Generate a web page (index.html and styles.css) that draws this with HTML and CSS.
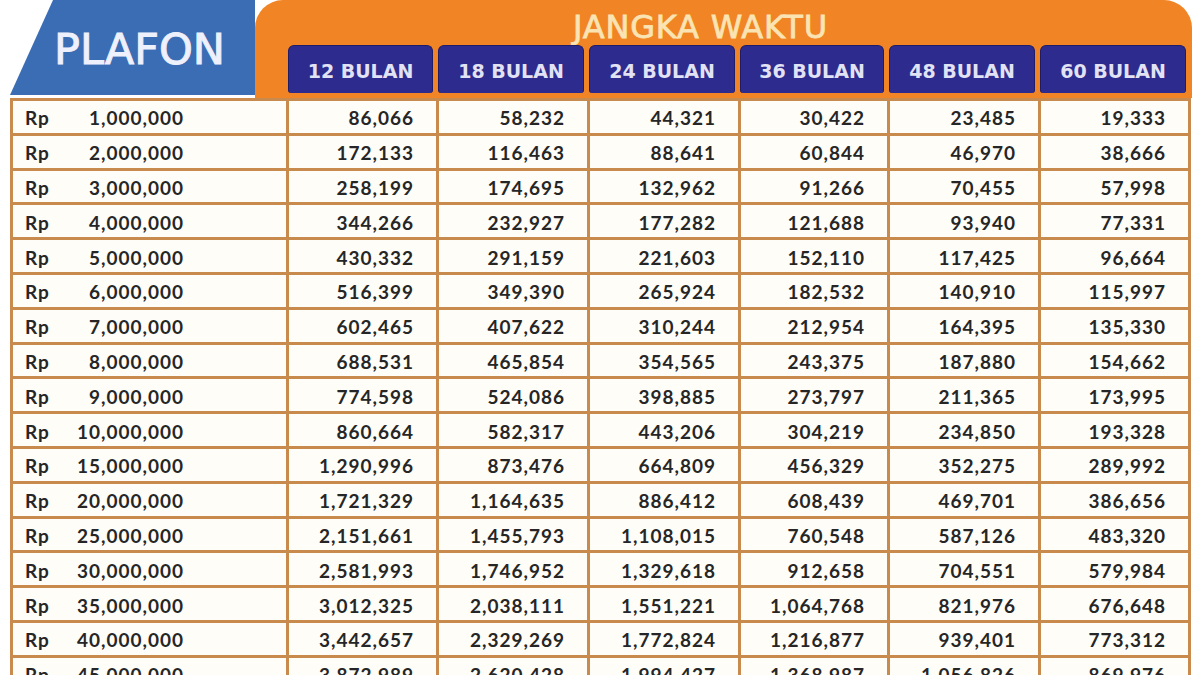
FILE: index.html
```html
<!DOCTYPE html>
<html>
<head>
<meta charset="utf-8">
<link rel="stylesheet" href="styles.css">
</head>
<body>
<div class="page">
  <div class="header">
    <div class="plafon"><span>PLAFON</span></div>
    <div class="jangka">
      <div class="jangka-title">JANGKA WAKTU</div>
      <div class="tabs">
        <div class="tab">12 BULAN</div>
        <div class="tab">18 BULAN</div>
        <div class="tab">24 BULAN</div>
        <div class="tab">36 BULAN</div>
        <div class="tab">48 BULAN</div>
        <div class="tab">60 BULAN</div>
      </div>
    </div>
  </div>
  <div class="grid">
    <div class="c0"><span>Rp</span><span>1,000,000</span></div><div class="n">86,066</div><div class="n">58,232</div><div class="n">44,321</div><div class="n">30,422</div><div class="n">23,485</div><div class="n">19,333</div>
    <div class="c0"><span>Rp</span><span>2,000,000</span></div><div class="n">172,133</div><div class="n">116,463</div><div class="n">88,641</div><div class="n">60,844</div><div class="n">46,970</div><div class="n">38,666</div>
    <div class="c0"><span>Rp</span><span>3,000,000</span></div><div class="n">258,199</div><div class="n">174,695</div><div class="n">132,962</div><div class="n">91,266</div><div class="n">70,455</div><div class="n">57,998</div>
    <div class="c0"><span>Rp</span><span>4,000,000</span></div><div class="n">344,266</div><div class="n">232,927</div><div class="n">177,282</div><div class="n">121,688</div><div class="n">93,940</div><div class="n">77,331</div>
    <div class="c0"><span>Rp</span><span>5,000,000</span></div><div class="n">430,332</div><div class="n">291,159</div><div class="n">221,603</div><div class="n">152,110</div><div class="n">117,425</div><div class="n">96,664</div>
    <div class="c0"><span>Rp</span><span>6,000,000</span></div><div class="n">516,399</div><div class="n">349,390</div><div class="n">265,924</div><div class="n">182,532</div><div class="n">140,910</div><div class="n">115,997</div>
    <div class="c0"><span>Rp</span><span>7,000,000</span></div><div class="n">602,465</div><div class="n">407,622</div><div class="n">310,244</div><div class="n">212,954</div><div class="n">164,395</div><div class="n">135,330</div>
    <div class="c0"><span>Rp</span><span>8,000,000</span></div><div class="n">688,531</div><div class="n">465,854</div><div class="n">354,565</div><div class="n">243,375</div><div class="n">187,880</div><div class="n">154,662</div>
    <div class="c0"><span>Rp</span><span>9,000,000</span></div><div class="n">774,598</div><div class="n">524,086</div><div class="n">398,885</div><div class="n">273,797</div><div class="n">211,365</div><div class="n">173,995</div>
    <div class="c0"><span>Rp</span><span>10,000,000</span></div><div class="n">860,664</div><div class="n">582,317</div><div class="n">443,206</div><div class="n">304,219</div><div class="n">234,850</div><div class="n">193,328</div>
    <div class="c0"><span>Rp</span><span>15,000,000</span></div><div class="n">1,290,996</div><div class="n">873,476</div><div class="n">664,809</div><div class="n">456,329</div><div class="n">352,275</div><div class="n">289,992</div>
    <div class="c0"><span>Rp</span><span>20,000,000</span></div><div class="n">1,721,329</div><div class="n">1,164,635</div><div class="n">886,412</div><div class="n">608,439</div><div class="n">469,701</div><div class="n">386,656</div>
    <div class="c0"><span>Rp</span><span>25,000,000</span></div><div class="n">2,151,661</div><div class="n">1,455,793</div><div class="n">1,108,015</div><div class="n">760,548</div><div class="n">587,126</div><div class="n">483,320</div>
    <div class="c0"><span>Rp</span><span>30,000,000</span></div><div class="n">2,581,993</div><div class="n">1,746,952</div><div class="n">1,329,618</div><div class="n">912,658</div><div class="n">704,551</div><div class="n">579,984</div>
    <div class="c0"><span>Rp</span><span>35,000,000</span></div><div class="n">3,012,325</div><div class="n">2,038,111</div><div class="n">1,551,221</div><div class="n">1,064,768</div><div class="n">821,976</div><div class="n">676,648</div>
    <div class="c0"><span>Rp</span><span>40,000,000</span></div><div class="n">3,442,657</div><div class="n">2,329,269</div><div class="n">1,772,824</div><div class="n">1,216,877</div><div class="n">939,401</div><div class="n">773,312</div>
    <div class="c0"><span>Rp</span><span>45,000,000</span></div><div class="n">3,872,989</div><div class="n">2,620,428</div><div class="n">1,994,427</div><div class="n">1,368,987</div><div class="n">1,056,826</div><div class="n">869,976</div>
  </div>
</div>
</body>
</html>
```
FILE: styles.css
```css
html, body {
  margin: 0;
  padding: 0;
  background: #ffffff;
  overflow: hidden;
}
.page {
  width: 1200px;
  height: 675px;
  overflow: hidden;
  padding-left: 10px;
  box-sizing: border-box;
}
.header {
  display: flex;
  width: 1182px;
  height: 98px;
}
.plafon {
  width: 245px;
  height: 95px;
  background: #3b6db5;
  clip-path: polygon(43px 0, 100% 0, 100% 100%, 0 100%);
  display: flex;
  align-items: center;
  padding-left: 44px;
  box-sizing: border-box;
}
.plafon span {
  font-family: "DejaVu Sans", sans-serif;
  font-size: 43px;
  color: #eef0fb;
  -webkit-text-stroke: 1px #eef0fb;
  margin-top: 2px;
}
.jangka {
  flex: 1;
  background: #f18424;
  border-radius: 28px 28px 0 0;
  display: flex;
  flex-direction: column;
  padding-left: 32px;
}
.jangka-title {
  height: 45px;
  display: flex;
  align-items: center;
  justify-content: center;
  font-family: "DejaVu Sans", sans-serif;
  font-size: 32px;
  letter-spacing: 0.8px;
  color: #fae4b4;
  -webkit-text-stroke: 0.8px #fae4b4;
  padding-right: 78px;
  padding-top: 8px;
  box-sizing: border-box;
}
.tabs {
  display: grid;
  grid-template-columns: 150px 151px 151px 149px 151px 151px;
  height: 48px;
}
.tab {
  margin: 0 4px 0 1px;
  background: #2d2b8d;
  border: 1px solid #1f1d6a;
  border-bottom: none;
  border-radius: 6px 6px 3px 3px;
  display: flex;
  align-items: center;
  justify-content: center;
  font-family: "DejaVu Sans", sans-serif;
  font-weight: bold;
  font-size: 19px;
  color: #e2e2f5;
  padding-top: 2px;
}
.grid {
  display: grid;
  grid-template-columns: 273px 147px 148px 148px 146px 148px 147px;
  grid-auto-rows: 31.8px;
  gap: 3px;
  padding: 3px;
  width: 1181px;
  box-sizing: border-box;
  background: #c98a4e;
}
.grid > div {
  background: #fffdf8;
  font-family: Lato, "Open Sans", sans-serif;
  font-weight: bold;
  font-size: 19px;
  letter-spacing: 1px;
  color: #262626;
  display: flex;
  align-items: center;
  padding-top: 2px;
  box-sizing: border-box;
}
.grid > .c0 {
  justify-content: space-between;
  padding: 2px 102px 0 12px;
}
.grid > .n {
  justify-content: flex-end;
  padding-right: 22px;
}
```
